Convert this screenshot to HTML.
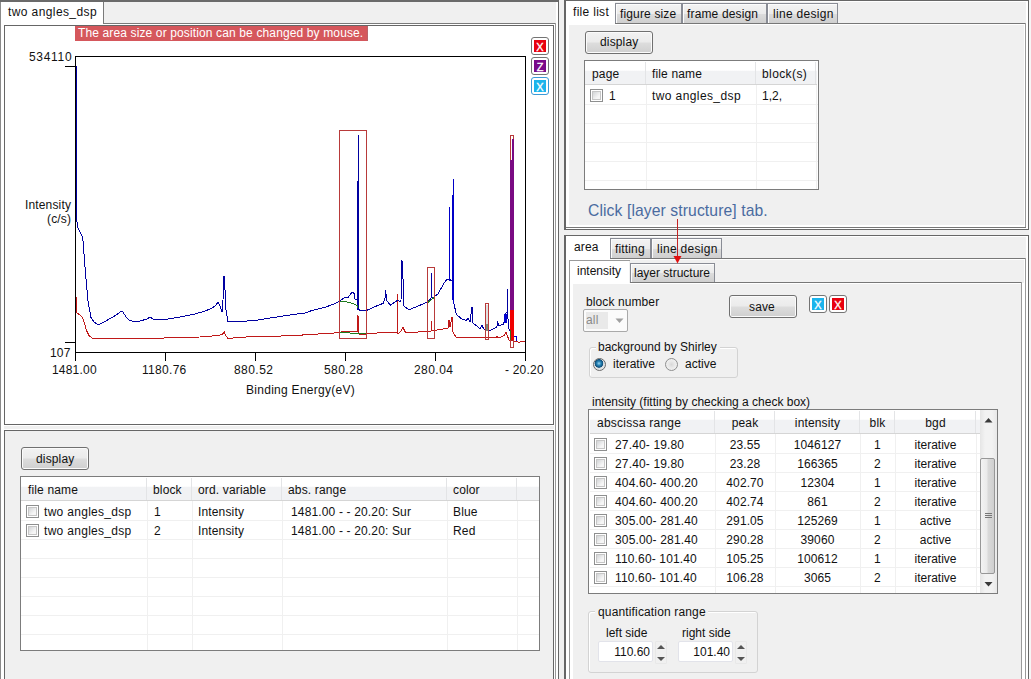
<!DOCTYPE html>
<html><head><meta charset="utf-8">
<style>
html,body{margin:0;padding:0}
body{width:1031px;height:679px;overflow:hidden;position:relative;background:#f0f0f0;font-family:"Liberation Sans",sans-serif;font-size:12px;color:#000}
.a{position:absolute;box-sizing:border-box}
.t{position:absolute;white-space:pre;line-height:14px;font-size:12px;letter-spacing:0.15px;color:#111}
.btn{position:absolute;box-sizing:border-box;border:1px solid #707070;border-radius:3px;background:linear-gradient(#f2f2f2 0%,#ebebeb 48%,#dddddd 52%,#cfcfcf 100%);box-shadow:inset 0 0 0 1px #fbfbfb}
.cb{position:absolute;box-sizing:border-box;width:13px;height:13px;border:1px solid #8e8f8f;background:#fff}.cb:after{content:'';position:absolute;left:1px;top:1px;width:9px;height:9px;box-sizing:border-box;border:1px solid #c6c6c6;background:linear-gradient(135deg,#d2d4d6,#f6f6f6 70%)}
.xb{position:absolute;box-sizing:border-box;width:18px;height:18px;border:1px solid #747474;border-radius:3px;background:#fff}
.xb i{position:absolute;left:2px;top:2px;width:12px;height:12px;font-style:normal;color:#fff;font-size:11px;line-height:14px;text-align:center;overflow:hidden;-webkit-text-stroke:0.3px #fff}
.tabu{position:absolute;box-sizing:border-box;border:1px solid #898c95;border-bottom:none;background:linear-gradient(#f3f3f3 0%,#ebebeb 50%,#dcdcdc 52%,#cfcfcf 100%);box-shadow:inset 1px 1px 0 #fcfcfc}
</style></head>
<body>
<div class="a" style="left:0px;top:0px;width:559px;height:2px;background:#6a6a6a;"></div>
<div class="a" style="left:0px;top:2px;width:1px;height:677px;background:#8a8a8a;"></div>
<div class="a" style="left:558px;top:0px;width:1px;height:679px;background:#666;"></div>
<div class="a" style="left:1px;top:2px;width:102px;height:22px;background:#fff;"></div>
<div class="a" style="left:103px;top:2px;width:1px;height:22px;background:#7a7a7a;"></div>
<div class="a" style="left:104px;top:23px;width:452px;height:1px;background:#7a7a7a;"></div>
<div class="a" style="left:1px;top:24px;width:554px;height:655px;background:#fff;"></div>
<div class="a" style="left:555px;top:23px;width:1px;height:656px;background:#9a9a9a;"></div>
<div class="a" style="left:556px;top:2px;width:2px;height:677px;background:#fff;"></div>
<div class="t" style="left:8px;top:5px;letter-spacing:0.4px">two angles_dsp</div>
<div class="a" style="left:4px;top:25px;width:550px;height:400px;background:#fff;border:1px solid #666;"></div>
<div class="a" style="left:75px;top:26px;width:293px;height:15px;background:#d5575c;"></div>
<div class="a" style="left:367px;top:26px;width:1px;height:15px;background:#b8646a;"></div>
<div class="t" style="left:78px;top:26px;color:#fff;letter-spacing:0.13px">The area size or position can be changed by mouse.</div>
<div class="xb" style="left:531px;top:37px"><i style="background:#e8000f">X</i></div>
<div class="xb" style="left:531px;top:57px"><i style="background:#7a0a8a">Z</i></div>
<div class="xb" style="left:531px;top:77px;border-color:#3a9ad8"><i style="background:#1ab4ec">X</i></div>
<svg class="a" style="left:0;top:0" width="1031" height="679">
<g fill="none" stroke-width="1" shape-rendering="crispEdges">
<path d="M75.5,56.5H525.5V352.5H75.5Z M65,66.5H75.5 M65,342.5H75.5 M75.5,352.5V361 M165.5,352.5V361 M255.5,352.5V361 M345.5,352.5V361 M435.5,352.5V361 M525.5,352.5V361" stroke="#000"/>
</g>
<g fill="none" stroke-width="1" stroke-linejoin="round" shape-rendering="crispEdges">
<polyline points="76.0,296.6 76.0,309.0 77.0,313.0 82.0,316.6 84.0,322.0 86.6,330.6 89.0,335.5 92.7,338.5 112.0,339.0 150.0,338.4 200.0,337.0 218.0,335.5 222.0,334.5 224.4,332.0 225.5,335.0 228.0,338.4 250.0,336.7 290.0,335.8 339.0,332.7 343.0,331.5 356.0,331.5 357.5,331.0 358.0,315.4 358.5,331.0 359.0,334.1 366.0,334.1 380.0,332.7 397.0,332.3 397.5,295.0 398.0,334.0 401.0,331.0 403.0,327.2 405.6,332.8 427.6,331.4 431.0,331.0 431.5,321.3 432.0,331.0 448.0,328.0 449.0,320.4 450.0,327.0 452.0,317.0 453.0,332.3 456.4,337.9 488.5,337.9 495.0,337.8 497.0,336.7 499.0,338.0 504.0,335.7 506.0,332.0 507.0,335.1 509.0,340.0 514.0,341.0 517.0,341.5 519.0,342.6 521.0,341.5 525.0,341.5" stroke="#c01818"/>
<polyline points="76.0,66.0 76.0,205.0 76.0,215.0 78.0,228.0 82.0,236.0 83.0,241.0 86.0,279.0 88.0,301.0 91.0,317.5 94.0,322.0 97.0,324.0 100.0,324.0 104.0,322.0 112.0,317.5 116.0,315.0 121.0,311.5 123.0,312.0 126.0,317.0 129.0,320.0 134.0,321.5 140.0,321.0 147.0,319.0 150.0,317.0 152.0,318.5 155.0,320.0 165.0,319.5 180.0,317.0 195.0,314.0 205.0,311.0 210.0,309.0 213.0,307.5 216.0,305.0 218.0,302.0 220.0,306.0 222.0,312.0 223.0,300.0 224.0,276.0 225.0,290.0 226.0,310.0 228.0,322.0 240.0,321.5 255.0,320.5 270.0,318.0 290.0,315.0 305.0,313.0 312.0,310.5 326.0,307.0 335.0,303.5 339.5,301.0 345.0,297.2 348.0,297.7 352.0,292.0 354.0,293.4 355.0,299.2 357.0,299.6 358.0,309.7 359.0,309.7 361.5,311.0 366.0,310.7 373.0,307.5 380.0,304.5 383.0,303.5 385.0,298.0 385.6,290.8 387.0,301.0 390.3,305.2 398.0,300.1 400.5,301.8 401.0,300.0 402.0,260.3 403.0,279.0 403.5,290.0 404.0,306.0 408.9,309.8 417.0,306.5 426.0,302.6 431.0,298.5 431.3,273.0 432.0,298.4 437.7,294.2 442.0,287.0 444.0,283.0 446.0,280.6 447.0,279.0 449.0,279.0 452.0,281.0 453.5,281.0 454.0,304.0 456.4,314.5 461.4,318.7 466.5,320.4 468.0,318.0 470.0,322.0 472.0,307.0 473.0,323.0 478.4,327.2 480.0,328.8 482.0,325.6 484.0,329.3 487.0,331.0 490.0,330.4 495.0,328.2 497.0,326.7 497.5,321.4 499.0,325.6 503.0,324.5 504.0,322.4 505.0,315.0 506.0,312.9 507.0,312.9 507.5,290.0 508.0,319.2 509.0,328.8 510.0,331.0" stroke="#0000a0"/>
<polyline points="513.0,336.0 516.0,336.0 517.0,341.0" stroke="#0000c8"/>
<polyline points="339.5,301.0 350.0,302.5 357.0,305.4 359.0,309.7" stroke="#1e7a1e"/>
<polyline points="339.5,332.7 357.0,333.2 366.0,334.0" stroke="#1e7a1e"/>
<polyline points="427.6,302.6 434.0,297.5" stroke="#1e7a1e"/>
</g>
<g shape-rendering="crispEdges">
<rect x="358" y="135" width="1" height="175" fill="#0000a0"/>
<rect x="357" y="181" width="1" height="119" fill="#0000a0"/>
<rect x="449" y="207" width="1" height="74" fill="#0000c8"/>
<rect x="452" y="195" width="1" height="105" fill="#0000c8"/>
<rect x="453" y="179" width="1" height="125" fill="#0000c8"/>
</g>
<g fill="none" stroke="#b83a3a" stroke-width="1" shape-rendering="crispEdges">
<rect x="339.5" y="130.5" width="27" height="208"/>
<rect x="427.5" y="267.5" width="7" height="71"/>
<rect x="485.5" y="303.5" width="3" height="36"/>
<rect x="510.5" y="135.5" width="3" height="212"/>
</g>
<rect x="504" y="314" width="3" height="9" fill="#0000d0"/>
<rect x="510" y="160" width="4" height="150" fill="#7a0a82"/>
<rect x="512" y="139" width="2" height="21" fill="#7a0a82"/>
<rect x="510" y="310" width="4" height="30" fill="#f00000"/>
<rect x="510" y="330" width="1" height="10" fill="#3a6a1a"/>
<rect x="486" y="305" width="2" height="19" fill="#e0e0e0"/><rect x="486" y="324" width="2" height="7" fill="#7a8a7a"/>
</svg>
<div class="t" style="left:29px;top:50px;letter-spacing:0.7px">534110</div>
<div class="t" style="left:50px;top:346px;">107</div>
<div class="t" style="left:52px;top:363px;letter-spacing:0.2px">1481.00</div>
<div class="t" style="left:142px;top:363px;letter-spacing:0.3px">1180.76</div>
<div class="t" style="left:234px;top:363px;letter-spacing:0.45px">880.52</div>
<div class="t" style="left:324px;top:363px;letter-spacing:0.45px">580.28</div>
<div class="t" style="left:414px;top:363px;letter-spacing:0.45px">280.04</div>
<div class="t" style="left:505px;top:363px;letter-spacing:0.2px">- 20.20</div>
<div class="t" style="left:246px;top:383px;letter-spacing:0.28px">Binding Energy(eV)</div>
<div class="t" style="left:25px;top:198px;">Intensity</div>
<div class="t" style="left:47px;top:212px;">(c/s)</div>
<div class="a" style="left:4px;top:426px;width:550px;height:3px;background:#f0f0f0;"></div>
<div class="a" style="left:4px;top:430px;width:550px;height:260px;background:#f0f0f0;border:1px solid #666;"></div>
<div class="btn" style="left:21px;top:447px;width:68px;height:23px"></div>
<div class="t" style="left:36px;top:452px;">display</div>
<div class="a" style="left:20px;top:476px;width:520px;height:175px;background:#fff;border:1px solid #7c7c7c;"></div>
<div class="a" style="left:21px;top:477px;width:518px;height:23px;background:linear-gradient(#ffffff 0%,#ffffff 40%,#f1f2f4 45%,#f1f2f4 100%);"></div>
<div class="a" style="left:21px;top:500px;width:518px;height:1px;background:#d5d5d5;"></div>
<div class="a" style="left:21px;top:520px;width:518px;height:1px;background:#f0f0f0;"></div>
<div class="a" style="left:21px;top:539px;width:518px;height:1px;background:#f0f0f0;"></div>
<div class="a" style="left:21px;top:558px;width:518px;height:1px;background:#f0f0f0;"></div>
<div class="a" style="left:21px;top:577px;width:518px;height:1px;background:#f0f0f0;"></div>
<div class="a" style="left:21px;top:596px;width:518px;height:1px;background:#f0f0f0;"></div>
<div class="a" style="left:21px;top:615px;width:518px;height:1px;background:#f0f0f0;"></div>
<div class="a" style="left:21px;top:634px;width:518px;height:1px;background:#f0f0f0;"></div>
<div class="a" style="left:146px;top:478px;width:1px;height:22px;background:#e3e4e6;"></div>
<div class="a" style="left:147px;top:501px;width:1px;height:149px;background:#f0f0f0;"></div>
<div class="a" style="left:191px;top:478px;width:1px;height:22px;background:#e3e4e6;"></div>
<div class="a" style="left:192px;top:501px;width:1px;height:149px;background:#f0f0f0;"></div>
<div class="a" style="left:281px;top:478px;width:1px;height:22px;background:#e3e4e6;"></div>
<div class="a" style="left:282px;top:501px;width:1px;height:149px;background:#f0f0f0;"></div>
<div class="a" style="left:446px;top:478px;width:1px;height:22px;background:#e3e4e6;"></div>
<div class="a" style="left:447px;top:501px;width:1px;height:149px;background:#f0f0f0;"></div>
<div class="a" style="left:516px;top:478px;width:1px;height:22px;background:#e3e4e6;"></div>
<div class="a" style="left:517px;top:501px;width:1px;height:149px;background:#f0f0f0;"></div>
<div class="cb" style="left:26px;top:505px"></div>
<div class="t" style="left:44px;top:505px;letter-spacing:0.3px">two angles_dsp</div>
<div class="t" style="left:154px;top:505px;">1</div>
<div class="t" style="left:198px;top:505px;">Intensity</div>
<div class="t" style="left:291px;top:505px;">1481.00 - - 20.20: Sur</div>
<div class="t" style="left:453px;top:505px;">Blue</div>
<div class="cb" style="left:26px;top:524px"></div>
<div class="t" style="left:44px;top:524px;letter-spacing:0.3px">two angles_dsp</div>
<div class="t" style="left:154px;top:524px;">2</div>
<div class="t" style="left:198px;top:524px;">Intensity</div>
<div class="t" style="left:291px;top:524px;">1481.00 - - 20.20: Sur</div>
<div class="t" style="left:453px;top:524px;">Red</div>
<div class="t" style="left:28px;top:483px;">file name</div>
<div class="t" style="left:153px;top:483px;">block</div>
<div class="t" style="left:198px;top:483px;">ord. variable</div>
<div class="t" style="left:288px;top:483px;">abs. range</div>
<div class="t" style="left:453px;top:483px;">color</div>
<div class="a" style="left:564px;top:0px;width:465px;height:230px;background:#f0f0f0;border:1px solid #666;border-left-width:2px;"></div>
<div class="a" style="left:566px;top:1px;width:462px;height:1px;background:#fff;"></div>
<div class="a" style="left:1027px;top:1px;width:1px;height:228px;background:#fff;"></div>
<div class="a" style="left:566px;top:228px;width:462px;height:1px;background:#fff;"></div>
<div class="a" style="left:566px;top:2px;width:48px;height:22px;background:#fff;"></div>
<div class="a" style="left:614px;top:2px;width:1px;height:22px;background:#fff;"></div>
<div class="tabu" style="left:615px;top:3px;width:67px;height:20px"></div>
<div class="tabu" style="left:682px;top:3px;width:85px;height:20px"></div>
<div class="tabu" style="left:767px;top:3px;width:71px;height:20px"></div>
<div class="a" style="left:615px;top:23px;width:411px;height:1px;background:#777;"></div>
<div class="a" style="left:1025px;top:23px;width:1px;height:205px;background:#9a9a9a;"></div>
<div class="a" style="left:566px;top:227px;width:460px;height:1px;background:#777;"></div>
<div class="a" style="left:566px;top:24px;width:3px;height:203px;background:#fff;"></div>
<div class="a" style="left:569px;top:24px;width:456px;height:1px;background:#fff;"></div>
<div class="a" style="left:1026px;top:2px;width:1px;height:226px;background:#fff;"></div>
<div class="a" style="left:569px;top:25px;width:456px;height:202px;background:#f0f0f0;"></div>
<div class="a" style="left:569px;top:225px;width:456px;height:1px;background:#fff;"></div>
<div class="a" style="left:569px;top:226px;width:456px;height:1px;background:#fff;"></div>
<div class="a" style="left:1024px;top:25px;width:1px;height:202px;background:#fff;"></div>
<div class="t" style="left:573px;top:5px;letter-spacing:0.3px">file list</div>
<div class="t" style="left:620px;top:7px;">figure size</div>
<div class="t" style="left:687px;top:7px;">frame design</div>
<div class="t" style="left:773px;top:7px;letter-spacing:0.3px">line design</div>
<div class="btn" style="left:585px;top:31px;width:68px;height:23px"></div>
<div class="t" style="left:600px;top:35px;">display</div>
<div class="a" style="left:584px;top:60px;width:235px;height:130px;background:#fff;border:1px solid #7c7c7c;"></div>
<div class="a" style="left:585px;top:61px;width:232px;height:23px;background:linear-gradient(#ffffff 0%,#ffffff 40%,#f1f2f4 45%,#f1f2f4 100%);"></div>
<div class="a" style="left:585px;top:84px;width:232px;height:1px;background:#d5d5d5;"></div>
<div class="a" style="left:585px;top:104px;width:233px;height:1px;background:#f0f0f0;"></div>
<div class="a" style="left:585px;top:123px;width:233px;height:1px;background:#f0f0f0;"></div>
<div class="a" style="left:585px;top:142px;width:233px;height:1px;background:#f0f0f0;"></div>
<div class="a" style="left:585px;top:161px;width:233px;height:1px;background:#f0f0f0;"></div>
<div class="a" style="left:585px;top:180px;width:233px;height:1px;background:#f0f0f0;"></div>
<div class="a" style="left:645px;top:62px;width:1px;height:22px;background:#e3e4e6;"></div>
<div class="a" style="left:646px;top:85px;width:1px;height:104px;background:#f0f0f0;"></div>
<div class="a" style="left:755px;top:62px;width:1px;height:22px;background:#e3e4e6;"></div>
<div class="a" style="left:756px;top:85px;width:1px;height:104px;background:#f0f0f0;"></div>
<div class="a" style="left:815px;top:62px;width:1px;height:22px;background:#e3e4e6;"></div>
<div class="a" style="left:816px;top:85px;width:1px;height:104px;background:#f0f0f0;"></div>
<div class="cb" style="left:590px;top:89px"></div>
<div class="t" style="left:609px;top:89px;">1</div>
<div class="t" style="left:652px;top:89px;letter-spacing:0.4px">two angles_dsp</div>
<div class="t" style="left:762px;top:89px;letter-spacing:0px">1,2,</div>
<div class="t" style="left:592px;top:67px;">page</div>
<div class="t" style="left:652px;top:67px;">file name</div>
<div class="t" style="left:762px;top:67px;letter-spacing:0.4px">block(s)</div>
<div class="t" style="left:588px;top:202px;font-size:15.7px;line-height:18px;color:#4a6ba0;letter-spacing:0.1px">Click [layer structure] tab.</div>
<div class="a" style="left:564px;top:235px;width:465px;height:450px;background:#f0f0f0;border:1px solid #666;border-left-width:2px;"></div>
<div class="a" style="left:566px;top:236px;width:462px;height:1px;background:#fff;"></div>
<div class="a" style="left:1027px;top:236px;width:1px;height:443px;background:#fff;"></div>
<div class="a" style="left:1026px;top:236px;width:1px;height:443px;background:#fff;"></div>
<div class="a" style="left:566px;top:237px;width:44px;height:22px;background:#fff;"></div>
<div class="tabu" style="left:610px;top:238px;width:41px;height:20px"></div>
<div class="tabu" style="left:651px;top:238px;width:71px;height:20px"></div>
<div class="a" style="left:610px;top:258px;width:416px;height:1px;background:#777;"></div>
<div class="a" style="left:1025px;top:258px;width:1px;height:421px;background:#9a9a9a;"></div>
<div class="a" style="left:566px;top:259px;width:459px;height:1px;background:#fff;"></div>
<div class="a" style="left:566px;top:259px;width:3px;height:420px;background:#fff;"></div>
<div class="a" style="left:1024px;top:259px;width:1px;height:420px;background:#fff;"></div>
<div class="a" style="left:569px;top:261px;width:1px;height:418px;background:#9a9a9a;"></div>
<div class="a" style="left:569px;top:260px;width:61px;height:1px;background:#9a9a9a;"></div>
<div class="a" style="left:570px;top:261px;width:59px;height:22px;background:#fff;"></div>
<div class="tabu" style="left:630px;top:263px;width:85px;height:19px"></div>
<div class="a" style="left:630px;top:282px;width:392px;height:1px;background:#777;"></div>
<div class="a" style="left:1021px;top:282px;width:1px;height:397px;background:#9a9a9a;"></div>
<div class="a" style="left:570px;top:283px;width:3px;height:396px;background:#fff;"></div>
<div class="a" style="left:570px;top:283px;width:451px;height:1px;background:#fff;"></div>
<div class="a" style="left:1022px;top:283px;width:2px;height:396px;background:#fff;"></div>
<div class="a" style="left:573px;top:284px;width:448px;height:395px;background:#f0f0f0;"></div>
<div class="t" style="left:574px;top:240px;">area</div>
<div class="t" style="left:615px;top:242px;">fitting</div>
<div class="t" style="left:657px;top:242px;letter-spacing:0.3px">line design</div>
<div class="t" style="left:577px;top:264px;letter-spacing:0px">intensity</div>
<div class="t" style="left:634px;top:266px;letter-spacing:0px">layer structure</div>
<svg class="a" style="left:0;top:0" width="1031" height="679"><g shape-rendering="crispEdges"><rect x="677" y="219" width="1" height="38" fill="#c42424"/></g><path d="M673.5,256 L681.5,256 L677.5,263.5 Z" fill="#e01010"/></svg>
<div class="t" style="left:586px;top:295px;letter-spacing:0.1px">block number</div>
<div class="a" style="left:583px;top:309px;width:45px;height:23px;background:#fbfbfb;border:1px solid #a9a9a9;border-radius:2px;"></div>
<div class="a" style="left:586px;top:312px;width:22px;height:17px;background:#e9e9e9;"></div>
<div class="t" style="left:586px;top:313px;color:#8a8a8a">all</div>
<svg class="a" style="left:0;top:0" width="1031" height="679"><path d="M615.5,318.5 L623.5,318.5 L619.5,323 Z" fill="#a0a0a0"/></svg>
<div class="btn" style="left:729px;top:295px;width:68px;height:23px"></div>
<div class="t" style="left:749px;top:300px;">save</div>
<div class="xb" style="left:809px;top:295px"><i style="background:#1ab4ec">X</i></div>
<div class="xb" style="left:829px;top:295px"><i style="background:#e8000f">X</i></div>
<div class="a" style="left:589px;top:347px;width:149px;height:31px;border:1px solid #d3d3d3;border-radius:3px;box-shadow:inset 1px 1px 0 #fff;"></div>
<div class="a" style="left:596px;top:341px;width:124px;height:12px;background:#f0f0f0;"></div>
<div class="t" style="left:598px;top:340px;letter-spacing:0px">background by Shirley</div>
<div class="a" style="left:593px;top:358px;width:13px;height:13px;border-radius:50%;border:1px solid #6a6a6a;background:radial-gradient(circle at 45% 40%,#9fd6f0 0,#2a86b8 2px,#0f4f7a 4px,#d9dde0 4.6px,#f6f6f6 100%)"></div>
<div class="a" style="left:665px;top:358px;width:13px;height:13px;border-radius:50%;border:1px solid #8e8f8f;background:radial-gradient(circle at 50% 50%,#d8d8d8 0,#e8e8e8 3px,#f6f6f6 100%)"></div>
<div class="t" style="left:613px;top:357px;letter-spacing:0px">iterative</div>
<div class="t" style="left:685px;top:357px;letter-spacing:0px">active</div>
<div class="t" style="left:592px;top:395px;letter-spacing:0px">intensity (fitting by checking a check box)</div>
<div class="a" style="left:588px;top:409px;width:410px;height:185px;background:#fff;border:1px solid #7c7c7c;"></div>
<div class="a" style="left:589px;top:410px;width:391px;height:23px;background:linear-gradient(#ffffff 0%,#ffffff 40%,#f1f2f4 45%,#f1f2f4 100%);"></div>
<div class="a" style="left:589px;top:433px;width:391px;height:1px;background:#d5d5d5;"></div>
<div class="a" style="left:589px;top:453px;width:391px;height:1px;background:#f0f0f0;"></div>
<div class="a" style="left:589px;top:472px;width:391px;height:1px;background:#f0f0f0;"></div>
<div class="a" style="left:589px;top:491px;width:391px;height:1px;background:#f0f0f0;"></div>
<div class="a" style="left:589px;top:510px;width:391px;height:1px;background:#f0f0f0;"></div>
<div class="a" style="left:589px;top:529px;width:391px;height:1px;background:#f0f0f0;"></div>
<div class="a" style="left:589px;top:548px;width:391px;height:1px;background:#f0f0f0;"></div>
<div class="a" style="left:589px;top:567px;width:391px;height:1px;background:#f0f0f0;"></div>
<div class="a" style="left:589px;top:586px;width:391px;height:1px;background:#f0f0f0;"></div>
<div class="a" style="left:714px;top:411px;width:1px;height:22px;background:#e3e4e6;"></div>
<div class="a" style="left:715px;top:434px;width:1px;height:159px;background:#f0f0f0;"></div>
<div class="a" style="left:774px;top:411px;width:1px;height:22px;background:#e3e4e6;"></div>
<div class="a" style="left:775px;top:434px;width:1px;height:159px;background:#f0f0f0;"></div>
<div class="a" style="left:859px;top:411px;width:1px;height:22px;background:#e3e4e6;"></div>
<div class="a" style="left:860px;top:434px;width:1px;height:159px;background:#f0f0f0;"></div>
<div class="a" style="left:894px;top:411px;width:1px;height:22px;background:#e3e4e6;"></div>
<div class="a" style="left:895px;top:434px;width:1px;height:159px;background:#f0f0f0;"></div>
<div class="a" style="left:975px;top:411px;width:1px;height:22px;background:#e3e4e6;"></div>
<div class="a" style="left:976px;top:434px;width:1px;height:159px;background:#f0f0f0;"></div>
<div class="a" style="left:589px;top:410px;width:1px;height:183px;background:#fff;"></div>
<div class="a" style="left:980px;top:410px;width:17px;height:183px;background:linear-gradient(90deg,#e5e5e5,#f2f2f2 30%,#f2f2f2 70%,#e8e8e8);"></div>
<div class="a" style="left:980px;top:458px;width:15px;height:116px;border:1px solid #979797;border-radius:2px;background:linear-gradient(90deg,#f3f3f3 0%,#eaeaea 45%,#d9d9d9 55%,#cfcfcf 100%)"></div>
<svg class="a" style="left:0;top:0" width="1031" height="679"><path d="M984.5,422.5 L992.5,422.5 L988.5,418 Z" fill="#3a3a3a"/><path d="M984.5,582 L992.5,582 L988.5,586.5 Z" fill="#3a3a3a"/><g fill="#777"><rect x="985" y="513" width="7" height="1"/><rect x="985" y="515" width="7" height="1"/><rect x="985" y="517" width="7" height="1"/></g></svg>
<div class="t" style="left:597px;top:416px;letter-spacing:0.25px">abscissa range</div>
<div class="t" style="left:715px;top:416px;width:60px;text-align:center;">peak</div>
<div class="t" style="left:775px;top:416px;width:85px;text-align:center;">intensity</div>
<div class="t" style="left:860px;top:416px;width:35px;text-align:center;">blk</div>
<div class="t" style="left:895px;top:416px;width:81px;text-align:center;">bgd</div>
<div class="cb" style="left:594px;top:438px"></div>
<div class="t" style="left:615px;top:438px;letter-spacing:0.15px">27.40- 19.80</div>
<div class="t" style="left:715px;top:438px;width:60px;text-align:center;letter-spacing:0.1px">23.55</div>
<div class="t" style="left:775px;top:438px;width:85px;text-align:center;letter-spacing:0.1px">1046127</div>
<div class="t" style="left:860px;top:438px;width:35px;text-align:center;">1</div>
<div class="t" style="left:895px;top:438px;width:81px;text-align:center;letter-spacing:0px">iterative</div>
<div class="cb" style="left:594px;top:457px"></div>
<div class="t" style="left:615px;top:457px;letter-spacing:0.15px">27.40- 19.80</div>
<div class="t" style="left:715px;top:457px;width:60px;text-align:center;letter-spacing:0.1px">23.28</div>
<div class="t" style="left:775px;top:457px;width:85px;text-align:center;letter-spacing:0.1px">166365</div>
<div class="t" style="left:860px;top:457px;width:35px;text-align:center;">2</div>
<div class="t" style="left:895px;top:457px;width:81px;text-align:center;letter-spacing:0px">iterative</div>
<div class="cb" style="left:594px;top:476px"></div>
<div class="t" style="left:615px;top:476px;letter-spacing:0.15px">404.60- 400.20</div>
<div class="t" style="left:715px;top:476px;width:60px;text-align:center;letter-spacing:0.1px">402.70</div>
<div class="t" style="left:775px;top:476px;width:85px;text-align:center;letter-spacing:0.1px">12304</div>
<div class="t" style="left:860px;top:476px;width:35px;text-align:center;">1</div>
<div class="t" style="left:895px;top:476px;width:81px;text-align:center;letter-spacing:0px">iterative</div>
<div class="cb" style="left:594px;top:495px"></div>
<div class="t" style="left:615px;top:495px;letter-spacing:0.15px">404.60- 400.20</div>
<div class="t" style="left:715px;top:495px;width:60px;text-align:center;letter-spacing:0.1px">402.74</div>
<div class="t" style="left:775px;top:495px;width:85px;text-align:center;letter-spacing:0.1px">861</div>
<div class="t" style="left:860px;top:495px;width:35px;text-align:center;">2</div>
<div class="t" style="left:895px;top:495px;width:81px;text-align:center;letter-spacing:0px">iterative</div>
<div class="cb" style="left:594px;top:514px"></div>
<div class="t" style="left:615px;top:514px;letter-spacing:0.15px">305.00- 281.40</div>
<div class="t" style="left:715px;top:514px;width:60px;text-align:center;letter-spacing:0.1px">291.05</div>
<div class="t" style="left:775px;top:514px;width:85px;text-align:center;letter-spacing:0.1px">125269</div>
<div class="t" style="left:860px;top:514px;width:35px;text-align:center;">1</div>
<div class="t" style="left:895px;top:514px;width:81px;text-align:center;letter-spacing:0px">active</div>
<div class="cb" style="left:594px;top:533px"></div>
<div class="t" style="left:615px;top:533px;letter-spacing:0.15px">305.00- 281.40</div>
<div class="t" style="left:715px;top:533px;width:60px;text-align:center;letter-spacing:0.1px">290.28</div>
<div class="t" style="left:775px;top:533px;width:85px;text-align:center;letter-spacing:0.1px">39060</div>
<div class="t" style="left:860px;top:533px;width:35px;text-align:center;">2</div>
<div class="t" style="left:895px;top:533px;width:81px;text-align:center;letter-spacing:0px">active</div>
<div class="cb" style="left:594px;top:552px"></div>
<div class="t" style="left:615px;top:552px;letter-spacing:0.15px">110.60- 101.40</div>
<div class="t" style="left:715px;top:552px;width:60px;text-align:center;letter-spacing:0.1px">105.25</div>
<div class="t" style="left:775px;top:552px;width:85px;text-align:center;letter-spacing:0.1px">100612</div>
<div class="t" style="left:860px;top:552px;width:35px;text-align:center;">1</div>
<div class="t" style="left:895px;top:552px;width:81px;text-align:center;letter-spacing:0px">iterative</div>
<div class="cb" style="left:594px;top:571px"></div>
<div class="t" style="left:615px;top:571px;letter-spacing:0.15px">110.60- 101.40</div>
<div class="t" style="left:715px;top:571px;width:60px;text-align:center;letter-spacing:0.1px">106.28</div>
<div class="t" style="left:775px;top:571px;width:85px;text-align:center;letter-spacing:0.1px">3065</div>
<div class="t" style="left:860px;top:571px;width:35px;text-align:center;">2</div>
<div class="t" style="left:895px;top:571px;width:81px;text-align:center;letter-spacing:0px">iterative</div>
<div class="a" style="left:588px;top:611px;width:170px;height:62px;border:1px solid #d3d3d3;border-radius:3px;box-shadow:inset 1px 1px 0 #fff;"></div>
<div class="a" style="left:595px;top:605px;width:113px;height:12px;background:#f0f0f0;"></div>
<div class="t" style="left:598px;top:605px;letter-spacing:0.15px">quantification range</div>
<div class="t" style="left:606px;top:626px;letter-spacing:0px">left side</div>
<div class="t" style="left:682px;top:626px;letter-spacing:0px">right side</div>
<div class="a" style="left:598px;top:641px;width:55px;height:21px;background:#fff;border:1px solid #e2e3ea;border-radius:2px;"></div>
<div class="t" style="left:450px;top:645px;width:200px;text-align:right;letter-spacing:0px">110.60</div>
<div class="a" style="left:655px;top:641px;width:12px;height:23px;border:1px solid #e8e8e8;border-radius:1px;background:#f0f0f0"></div>
<svg class="a" style="left:0;top:0" width="1031" height="679"><path d="M657,649 L665,649 L661,645 Z" fill="#555"/><path d="M657,657 L665,657 L661,661 Z" fill="#555"/></svg>
<div class="a" style="left:678px;top:641px;width:55px;height:21px;background:#fff;border:1px solid #e2e3ea;border-radius:2px;"></div>
<div class="t" style="left:530px;top:645px;width:200px;text-align:right;letter-spacing:0px">101.40</div>
<div class="a" style="left:735px;top:641px;width:12px;height:23px;border:1px solid #e8e8e8;border-radius:1px;background:#f0f0f0"></div>
<svg class="a" style="left:0;top:0" width="1031" height="679"><path d="M737,649 L745,649 L741,645 Z" fill="#555"/><path d="M737,657 L745,657 L741,661 Z" fill="#555"/></svg>
<div class="a" style="left:1029px;top:0px;width:2px;height:679px;background:#f6f6f6;"></div>
</body></html>
